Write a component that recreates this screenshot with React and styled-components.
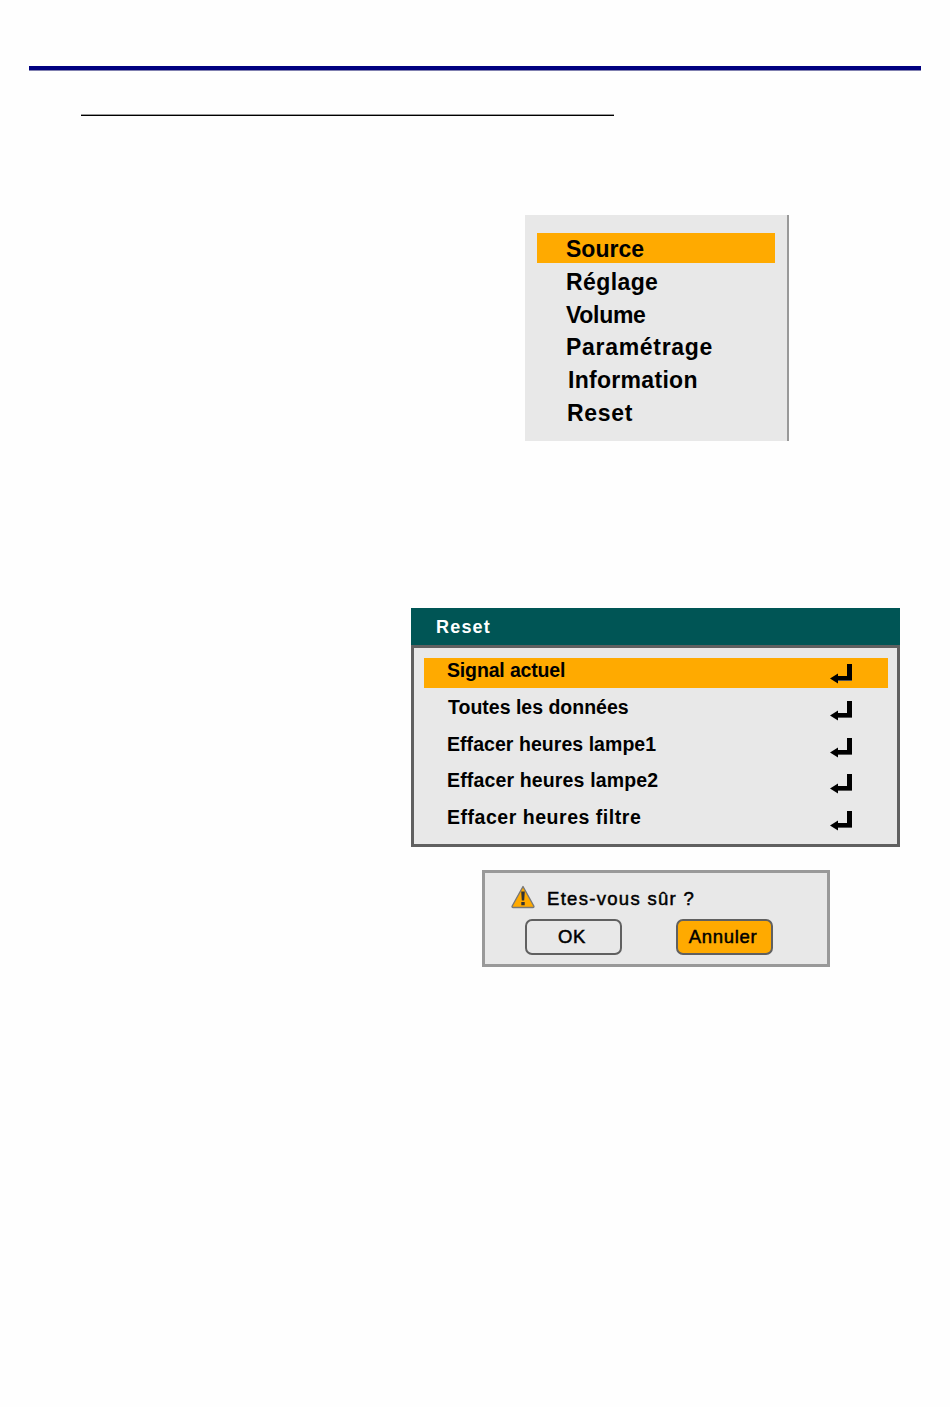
import styled, { createGlobalStyle } from "styled-components";

const GlobalStyle = createGlobalStyle`
body {
  margin: 0;
  background: #fefefe;
  font-family: "Liberation Sans", Arial, sans-serif;
  color: #000;
}
`;

const Page = styled.div`
width: 950px;
height: 1407px;
padding-top: 66px;
box-sizing: border-box;
overflow: hidden;
`;

const TopRule = styled.div`
height: 5px;
margin: 0 29px;
background: linear-gradient(#000080 0 4px, #8080b0 4px);
`;

const HeadingRule = styled.div`
height: 2px;
width: 533px;
margin: 43px 0 0 81px;
background: linear-gradient(#999 0 1px, #000 1px);
`;

const MainMenu = styled.div`
box-sizing: border-box;
width: 264px;
height: 226px;
margin: 99px 0 0 525px;
padding: 18px 12px 0;
background: #e8e8e8;
border-right: 2px solid #999;
display: flex;
flex-direction: column;
gap: 2.8px;
`;

const MenuItem = styled.div`
height: 30px;
line-height: 32px;
width: 238px;
box-sizing: border-box;
padding-left: ${(p) => p.$indent}px;
font-size: 23px;
font-weight: 700;
letter-spacing: ${(p) => p.$spacing || 0}px;
background: ${(p) => (p.$active ? "#ffaa00" : "transparent")};
`;

const ResetPanel = styled.div`
width: 489px;
margin: 167px 0 0 411px;
`;

const PanelTitle = styled.div`
height: 37px;
line-height: 38px;
padding-left: 25px;
background: #005555;
color: #fff;
font-size: 18px;
font-weight: 700;
letter-spacing: 1.2px;
`;

const PanelBody = styled.div`
box-sizing: border-box;
height: 202px;
padding: 10px 9px 0 10px;
background: #e8e8e8;
border: 3px solid #606060;
display: flex;
flex-direction: column;
gap: 6.75px;
`;

const PanelRow = styled.div`
height: 30px;
flex: none;
display: flex;
align-items: center;
justify-content: space-between;
padding: 0 35px 0 ${(p) => p.$indent || 23}px;
background: ${(p) => (p.$active ? "#ffaa00" : "transparent")};
`;

const RowLabel = styled.span`
font-size: 19.5px;
font-weight: 700;
letter-spacing: ${(p) => p.$spacing || 0}px;
position: relative;
top: ${(p) => p.$lift || -2}px;
`;

const EnterSvg = styled.svg`
width: 23px;
height: 20px;
position: relative;
top: 1px;
`;

const Dialog = styled.div`
box-sizing: border-box;
width: 348px;
height: 97px;
margin: 23px 0 0 482px;
padding: 12px 0 0 26px;
background: #e8e8e8;
border: 3px solid #999;
`;

const Message = styled.div`
display: flex;
align-items: center;
gap: 12px;
height: 24px;
`;

const MessageText = styled.span`
font-size: 18.5px;
letter-spacing: 1.3px;
-webkit-text-stroke: 0.5px #000;
position: relative;
top: 2px;
`;

const WarnSvg = styled.svg`
width: 24px;
height: 24px;
flex: none;
`;

const Buttons = styled.div`
display: flex;
gap: 54px;
margin: 10px 0 0 14px;
`;

const DialogButton = styled.div`
box-sizing: border-box;
width: 97px;
height: 36px;
padding-right: 3px;
display: flex;
align-items: center;
justify-content: center;
border: 2px solid #606060;
border-radius: 7px;
font-size: 18.5px;
letter-spacing: 0.7px;
-webkit-text-stroke: 0.5px #000;
background: ${(p) => (p.$active ? "#ffaa00" : "transparent")};
`;

function EnterIcon() {
  return (
    <EnterSvg viewBox="0 0 23 20">
      <path d="M17 0h5v16H8v3.500L0 14.500 8 9.500V12h9z" fill="#000" />
      <path d="M8 16h14v1H8z" fill="#555" />
    </EnterSvg>
  );
}

function WarnIcon() {
  return (
    <WarnSvg viewBox="0 0 24 24">
      <path d="M12 1.500 22.800 21a1 1 0 0 1-.9 1.500H2.100a1 1 0 0 1-.9-1.500z" fill="#ffaa00" stroke="#777" strokeWidth="1.400" strokeLinejoin="round" />
      <path d="M10.200 6.500h3.600l-.6 9h-2.400zM10.300 17h3.400v3.200h-3.400z" fill="#333" />
    </WarnSvg>
  );
}

const menu = [
  { label: "Source", indent: 29, active: true },
  { label: "Réglage", indent: 29, spacing: 0.4 },
  { label: "Volume", indent: 29, spacing: -0.3 },
  { label: "Paramétrage", indent: 29, spacing: 0.7 },
  { label: "Information", indent: 31, spacing: 0.3 },
  { label: "Reset", indent: 30, spacing: 0.7 },
];

const rows = [
  { label: "Signal actuel", active: true, spacing: -0.15, lift: -3 },
  { label: "Toutes les données", indent: 24 },
  { label: "Effacer heures lampe1", spacing: 0.05 },
  { label: "Effacer heures lampe2", spacing: 0.15, lift: -3 },
  { label: "Effacer heures filtre", spacing: 0.53, lift: -3 },
];

export default function App() {
  return (
    <Page>
      <GlobalStyle />
      <TopRule />
      <HeadingRule />
      <MainMenu>
        {menu.map((m) => (
          <MenuItem key={m.label} $indent={m.indent} $spacing={m.spacing} $active={m.active}>
            {m.label}
          </MenuItem>
        ))}
      </MainMenu>
      <ResetPanel>
        <PanelTitle>Reset</PanelTitle>
        <PanelBody>
          {rows.map((r) => (
            <PanelRow key={r.label} $indent={r.indent} $active={r.active}>
              <RowLabel $spacing={r.spacing} $lift={r.lift}>{r.label}</RowLabel>
              <EnterIcon />
            </PanelRow>
          ))}
        </PanelBody>
      </ResetPanel>
      <Dialog>
        <Message>
          <WarnIcon />
          <MessageText>Etes-vous sûr ?</MessageText>
        </Message>
        <Buttons>
          <DialogButton>OK</DialogButton>
          <DialogButton $active>Annuler</DialogButton>
        </Buttons>
      </Dialog>
    </Page>
  );
}
